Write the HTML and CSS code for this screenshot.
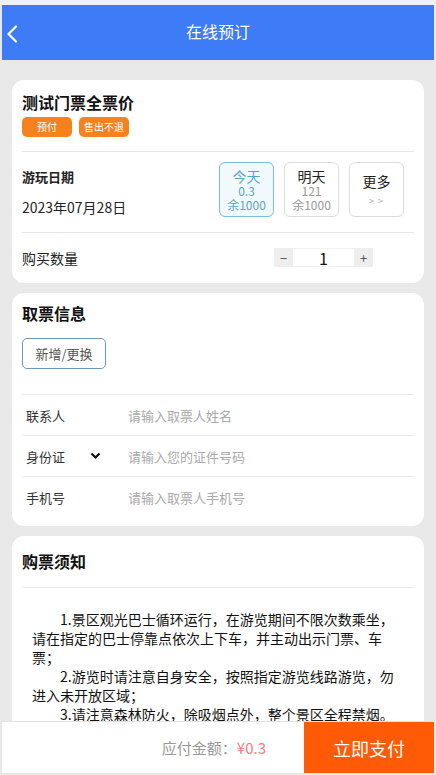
FILE: index.html
```html
<!DOCTYPE html>
<html lang="zh-CN">
<head>
<meta charset="utf-8" />
<title>在线预订</title>
<link rel="stylesheet" href="styles.css">
</head>
<body>
<div class="page">
    <div class="header">
        <a href="javascript:;" class="back">
            <svg width="12" height="18" viewBox="0 0 12 18"><path d="M10 1.5 L2.5 9 L10 16.5" fill="none" stroke="#fff" stroke-width="2.2" stroke-linecap="round" stroke-linejoin="round"/></svg>
        </a>
        <h1>在线预订</h1>
    </div>

    <div class="card ticket">
        <h2>测试门票全票价</h2>
        <div class="tags">
            <span class="tag">预付</span>
            <span class="tag">售出不退</span>
        </div>
        <div class="date-row">
            <div class="date-info">
                <div class="label-bold">游玩日期</div>
                <div class="date">2023年07月28日</div>
            </div>
            <div class="days">
                <div class="day on">
                    <span class="day-name">今天</span>
                    <span class="day-sub">0.3</span>
                    <span class="day-sub">余1000</span>
                </div>
                <div class="day">
                    <span class="day-name">明天</span>
                    <span class="day-sub">121</span>
                    <span class="day-sub">余1000</span>
                </div>
                <div class="day more">
                    <span class="day-name">更多</span>
                    <span class="arrows">&gt; &gt;</span>
                </div>
            </div>
        </div>
        <div class="qty-row">
            <span>购买数量</span>
            <div class="stepper">
                <span class="step">−</span>
                <span class="num">1</span>
                <span class="step">+</span>
            </div>
        </div>
    </div>

    <div class="card contact">
        <h2>取票信息</h2>
        <a href="javascript:;" class="btn-add">新增/更换</a>
        <div class="form">
            <div class="field">
                <span class="field-label">联系人</span>
                <span class="placeholder">请输入取票人姓名</span>
            </div>
            <div class="field">
                <span class="field-label">身份证
                    <svg class="chev" width="11" height="8" viewBox="0 0 11 8"><path d="M1.5 1.5 L5.5 5.5 L9.5 1.5" fill="none" stroke="#111" stroke-width="2.2"/></svg>
                </span>
                <span class="placeholder">请输入您的证件号码</span>
            </div>
            <div class="field">
                <span class="field-label">手机号</span>
                <span class="placeholder">请输入取票人手机号</span>
            </div>
        </div>
    </div>

    <div class="card notice">
        <h2>购票须知</h2>
        <div class="notice-body">
            <p>1.景区观光巴士循环运行，在游览期间不限次数乘坐，请在指定的巴士停靠点依次上下车，并主动出示门票、车票；</p>
            <p>2.游览时请注意自身安全，按照指定游览线路游览，勿进入未开放区域；</p>
            <p>3.请注意森林防火，除吸烟点外，整个景区全程禁烟。</p>
        </div>
    </div>
</div>

<div class="paybar">
    <div class="total">应付金额：<span class="price">¥0.3</span></div>
    <a href="javascript:;" class="pay">立即支付</a>
</div>
</body>
</html>
```

FILE: styles.css
```css
*{ margin: 0; padding: 0; box-sizing: border-box; text-decoration: none;}
html { background: #e9e9e9;}
body { background: #e9e9e9; font-family: "Noto Sans CJK SC", "Noto Sans", sans-serif; color: #222; padding: 0 2px 40px; border-top: 5px solid #eef1f5;}
.header { height: 55px; background: #3e7bf6; display: flex; align-items: center; justify-content: center; position: relative;}
.header h1 { color: #fff; font-size: 16px; font-weight: normal; margin-top: -3px;}
.back { position: absolute; left: 4px; top: 19px; display: block; height: 18px;}
.card { background: #fff; border-radius: 12px; margin: 0 10px 10px; padding: 0 10px;}
.ticket { margin-top: 20px; padding-top: 12px;}
.card h2 { font-size: 16px; line-height: 20px; font-weight: bold; color: #111;}
.tags { display: flex; gap: 7px; margin-top: 5px; padding-bottom: 14px; border-bottom: 1px solid #e8e8e8;}
.tag { width: 50px; height: 20px; line-height: 20px; text-align: center; background: #f5821f; color: #fff; font-size: 10px; border-radius: 5px;}
.date-row { display: flex; justify-content: space-between; padding: 10px 10px 15px 0; border-bottom: 1px solid #e8e8e8;}
.date-info { padding-top: 6px;}
.label-bold { font-size: 13px; font-weight: bold; line-height: 18px;}
.date { font-size: 14px; margin-top: 12px; line-height: 18px;}
.days { display: flex; gap: 10px;}
.day { width: 55px; height: 55px; border: 1px solid #dcdcdc; border-radius: 6px; display: flex; flex-direction: column; align-items: center; justify-content: center; color: #999;}
.day-name { font-size: 14px; line-height: 16px; color: #222;}
.day-sub { font-size: 12px; line-height: 14px;}
.day.on { border-color: #7dbdd6; background: #f1f9fd; color: #5da3c3;}
.day.on .day-name { color: #5da3c3;}
.day.more { justify-content: flex-start; padding-top: 10px;}
.arrows { font-size: 9px; color: #aaa; margin-top: 5px; letter-spacing: 1px;}
.qty-row { height: 50px; display: flex; align-items: center; justify-content: space-between; font-size: 14px; padding-right: 41px;}
.stepper { display: flex; height: 19px; margin-top: -2px;}
.step { width: 19px; background: #eee; color: #555; text-align: center; font-size: 13px; line-height: 19px;}
.num { width: 61px; text-align: center; font-size: 16px; line-height: 19px; color: #111; border-top: 1px solid #f2f2f2; border-bottom: 1px solid #f2f2f2;}
.contact { padding-top: 10px; padding-bottom: 8px;}
.btn-add { display: block; margin-top: 15px; width: 84px; height: 31px; line-height: 29px; text-align: center; border: 1px solid #6a9ab2; border-radius: 5px; color: #555; font-size: 13px;}
.form { margin-top: 25px; border-top: 1px solid #e8e8e8;}
.field { height: 41px; display: flex; align-items: center; font-size: 13px; border-bottom: 1px solid #e8e8e8;}
.field:last-child { border-bottom: none;}
.field-label { width: 106px; padding-left: 4px; color: #333; display: flex; align-items: center;}
.chev { margin-left: 25px;}
.placeholder { color: #aaa;}
.notice { padding-top: 15px; padding-bottom: 30px;}
.notice h2 { padding-bottom: 16px; border-bottom: 1px solid #e8e8e8;}
.notice-body { padding: 22px 19px 0 10px; font-size: 14px; line-height: 19px; color: #111;}
.notice-body p { text-indent: 2em;}
.paybar { position: fixed; left: 0; right: 0; bottom: 0; height: 54px; background: #fff; border: 2px solid #e9e9e9; border-top: 1px solid #e2e2e2; display: flex; align-items: center;}
.total { flex: 1; text-align: right; padding-right: 38px; font-size: 15px; color: #999;}
.price { color: #ee8080;}
.pay { width: 130px; height: 51px; background: #ff5a05; color: #fff; font-size: 18px; display: flex; align-items: center; justify-content: center;}
```
